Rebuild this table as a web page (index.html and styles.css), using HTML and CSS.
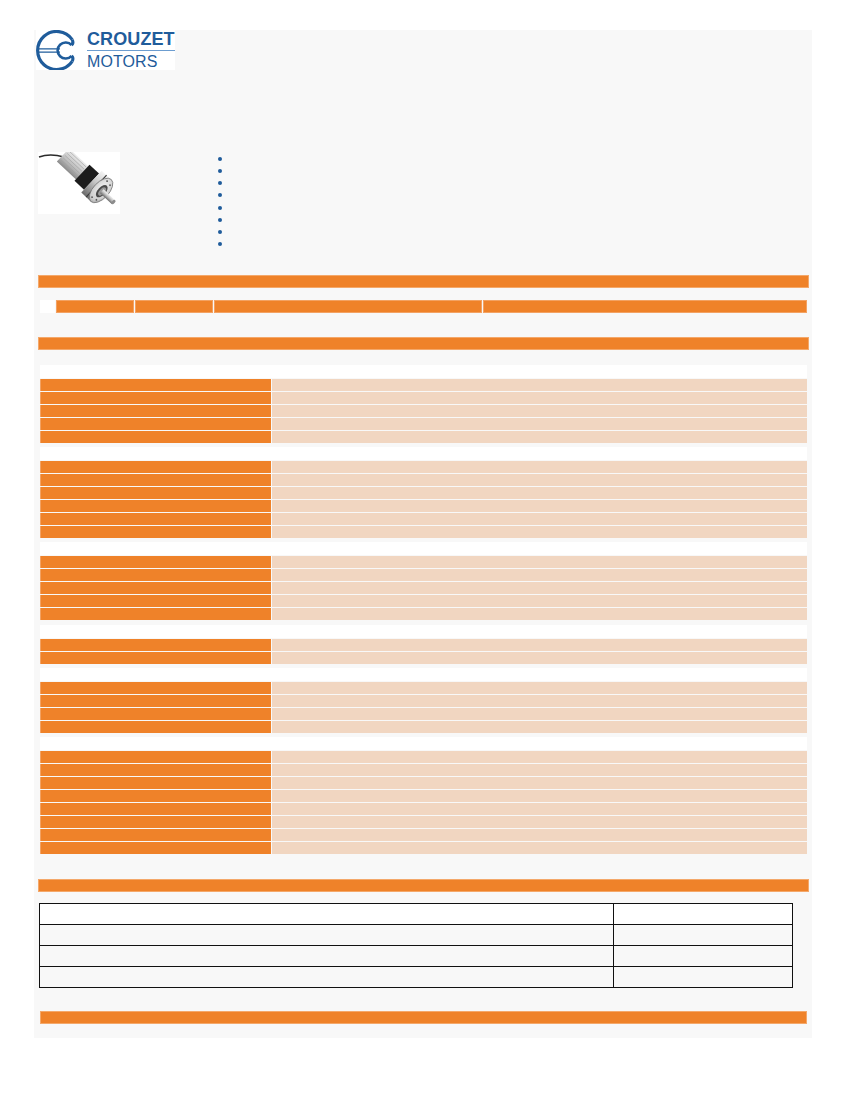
FILE: index.html
```html
<!DOCTYPE html>
<html lang="en">
<head>
<meta charset="utf-8">
<title>Crouzet Motors</title>
<link rel="stylesheet" href="styles.css">
</head>
<body>
<div class="page">
  <header class="logo">
    <svg class="logo-mark" viewBox="0 0 50 40" width="50" height="40" aria-hidden="true">
      <path d="M36.2 9.6 A19 19 0 1 0 36.2 31.4" fill="none" stroke="#1f5c9b" stroke-width="3.2"/>
      <path d="M36.2 9.6 Q38 13 35.6 15.2" fill="none" stroke="#1f5c9b" stroke-width="3"/>
      <path d="M36.2 31.4 Q38 28 35.6 25.8" fill="none" stroke="#1f5c9b" stroke-width="3"/>
      <path d="M35.6 15.2 A8 8 0 1 0 35.6 25.8" fill="none" stroke="#1f5c9b" stroke-width="2.6"/>
      <path d="M2 18.9 H24 M2 22.1 H24" stroke="#1f5c9b" stroke-width="1.3"/>
    </svg>
    <div class="logo-text">
      <div class="brand">CROUZET</div>
      <div class="brand-rule"></div>
      <div class="brand-sub">MOTORS</div>
    </div>
  </header>

  <section class="product">
    <div class="photo">
      <svg viewBox="0 0 82 62" width="82" height="62" aria-hidden="true">
        <defs>
          <linearGradient id="metal" x1="0" y1="0" x2="0" y2="1">
            <stop offset="0" stop-color="#f4f4f4"/>
            <stop offset="0.45" stop-color="#c4c4c4"/>
            <stop offset="1" stop-color="#6a6a6a"/>
          </linearGradient>
          <linearGradient id="housing" x1="0" y1="0" x2="0" y2="1">
            <stop offset="0" stop-color="#ececec"/>
            <stop offset="0.6" stop-color="#bcbcbc"/>
            <stop offset="1" stop-color="#8a8a8a"/>
          </linearGradient>
          <radialGradient id="face" cx="0.45" cy="0.4" r="0.7">
            <stop offset="0" stop-color="#f2f2f2"/>
            <stop offset="0.7" stop-color="#cfcfcf"/>
            <stop offset="1" stop-color="#8e8e8e"/>
          </radialGradient>
        </defs>
        <path d="M1 5 Q12 1 26 5" fill="none" stroke="#2a2a2a" stroke-width="1.4"/>
        <g transform="translate(25 3) rotate(43)">
          <rect x="0" y="-9" width="27" height="18" fill="url(#housing)"/>
          <path d="M2 -7 H25 M2 -4 H25 M2 -1 H25 M2 2 H25 M2 5 H25" stroke="#9e9e9e" stroke-width="0.6"/>
          <rect x="26" y="-11" width="13" height="22" fill="#1c1c1c"/>
          <rect x="39" y="-15" width="13" height="30" fill="url(#metal)"/>
          <rect x="45" y="-15" width="1.2" height="30" fill="#3a3a3a"/>
          <ellipse cx="52" cy="0" rx="8" ry="15" fill="url(#face)" stroke="#777" stroke-width="0.8"/>
          <ellipse cx="53" cy="0" rx="4" ry="7.5" fill="#4a4a4a"/>
          <ellipse cx="53.5" cy="0" rx="2.6" ry="5" fill="#9a9a9a"/>
          <rect x="53" y="-2.6" width="16" height="5.2" fill="url(#metal)"/>
          <ellipse cx="69" cy="0" rx="1.5" ry="2.6" fill="#8c8c8c"/>
          <circle cx="50" cy="-11" r="0.9" fill="#555"/>
          <circle cx="50" cy="11" r="0.9" fill="#555"/>
          <circle cx="55" cy="-10" r="0.9" fill="#555"/>
          <circle cx="55" cy="10" r="0.9" fill="#555"/>
        </g>
      </svg>
    </div>
    <ul class="features">
      <li></li><li></li><li></li><li></li><li></li><li></li><li></li><li></li>
    </ul>
  </section>

  <div class="bar bar-first"></div>

  <div class="ref-row">
    <div class="ref-cell ref-blank"></div>
    <div class="ref-cell ref-narrow"></div>
    <div class="ref-cell ref-narrow"></div>
    <div class="ref-cell ref-mid"></div>
    <div class="ref-cell ref-wide"></div>
  </div>

  <div class="bar bar-second"></div>

  <div class="specs">
    <div class="group">
      <div class="group-title"></div>
      <div class="row"><div class="k"></div><div class="v"></div></div>
      <div class="row"><div class="k"></div><div class="v"></div></div>
      <div class="row"><div class="k"></div><div class="v"></div></div>
      <div class="row"><div class="k"></div><div class="v"></div></div>
      <div class="row"><div class="k"></div><div class="v"></div></div>
    </div>
    <div class="group">
      <div class="group-title"></div>
      <div class="row"><div class="k"></div><div class="v"></div></div>
      <div class="row"><div class="k"></div><div class="v"></div></div>
      <div class="row"><div class="k"></div><div class="v"></div></div>
      <div class="row"><div class="k"></div><div class="v"></div></div>
      <div class="row"><div class="k"></div><div class="v"></div></div>
      <div class="row"><div class="k"></div><div class="v"></div></div>
    </div>
    <div class="group">
      <div class="group-title"></div>
      <div class="row"><div class="k"></div><div class="v"></div></div>
      <div class="row"><div class="k"></div><div class="v"></div></div>
      <div class="row"><div class="k"></div><div class="v"></div></div>
      <div class="row"><div class="k"></div><div class="v"></div></div>
      <div class="row"><div class="k"></div><div class="v"></div></div>
    </div>
    <div class="group">
      <div class="group-title"></div>
      <div class="row"><div class="k"></div><div class="v"></div></div>
      <div class="row"><div class="k"></div><div class="v"></div></div>
    </div>
    <div class="group">
      <div class="group-title"></div>
      <div class="row"><div class="k"></div><div class="v"></div></div>
      <div class="row"><div class="k"></div><div class="v"></div></div>
      <div class="row"><div class="k"></div><div class="v"></div></div>
      <div class="row"><div class="k"></div><div class="v"></div></div>
    </div>
    <div class="group">
      <div class="group-title"></div>
      <div class="row"><div class="k"></div><div class="v"></div></div>
      <div class="row"><div class="k"></div><div class="v"></div></div>
      <div class="row"><div class="k"></div><div class="v"></div></div>
      <div class="row"><div class="k"></div><div class="v"></div></div>
      <div class="row"><div class="k"></div><div class="v"></div></div>
      <div class="row"><div class="k"></div><div class="v"></div></div>
      <div class="row"><div class="k"></div><div class="v"></div></div>
      <div class="row"><div class="k"></div><div class="v"></div></div>
    </div>
  </div>

  <div class="bar bar-third"></div>

  <table class="docs">
    <tr class="docs-head"><td class="docs-name"></td><td></td></tr>
    <tr><td class="docs-name"></td><td></td></tr>
    <tr><td class="docs-name"></td><td></td></tr>
    <tr><td class="docs-name"></td><td></td></tr>
  </table>

  <div class="bar bar-last"></div>
</div>
</body>
</html>
```

FILE: styles.css
```css
html, body {
  margin: 0;
  padding: 0;
  background: #ffffff;
  font-family: "Liberation Sans", Arial, sans-serif;
}

.page {
  display: flow-root;
  margin: 30px 0 0 34px;
  width: 778px;
  padding-bottom: 14px;
  background: #f8f8f8;
}

/* Logo */
.logo {
  display: flex;
  margin-left: 2px;
  width: 139px;
  height: 40px;
  background: #ffffff;
}

.logo-mark {
  flex: none;
  display: block;
}

.logo-text {
  flex: 1;
  padding-left: 1px;
  color: #1f5c9b;
}

.brand {
  font-size: 18px;
  line-height: 18px;
  font-weight: bold;
  letter-spacing: 0.1px;
}

.brand-rule {
  margin-top: 2px;
  height: 1px;
  background: #6c9dd0;
}

.brand-sub {
  margin-top: 3px;
  font-size: 16px;
  line-height: 16px;
  letter-spacing: 0.1px;
}

/* Product */
.product {
  display: flex;
  align-items: flex-start;
  margin-top: 82px;
  height: 100px;
}

.photo {
  flex: none;
  margin-left: 4px;
  width: 82px;
  height: 62px;
  background: #ffffff;
}

.photo svg {
  display: block;
}

.features {
  list-style: none;
  margin: 0 0 0 98px;
  padding: 5px 0 0 0;
}

.features li {
  box-sizing: border-box;
  height: 12.15px;
}

.features li::before {
  content: "";
  display: block;
  width: 4px;
  height: 4px;
  border-radius: 50%;
  background: #1f5c9b;
}

/* Orange section bars */
.bar {
  box-sizing: border-box;
  height: 13px;
  margin: 24px 3px 0 4px;
  background: #ef8229;
  border: 1px solid #f4a86a;
}

.bar-first {
  margin-top: 23px;
}

.bar-third {
  margin-top: 25px;
}

.bar-last {
  margin: 23px 5px 0 6px;
}

/* Reference row */
.ref-row {
  display: flex;
  gap: 1px;
  margin: 12px 0 0 6px;
  height: 13px;
}

.ref-cell {
  background: #ef8229;
  box-shadow: inset 0 0 0 1px #f3a263;
}

.ref-blank {
  width: 15px;
  background: #ffffff;
  box-shadow: none;
}

.ref-narrow { width: 78px; }
.ref-mid { width: 268px; }
.ref-wide { width: 324px; }

/* Specifications */
.specs {
  display: flex;
  flex-direction: column;
  gap: 4.2px;
  margin: 15px 0 0 6px;
  width: 767px;
}

.group {
  display: flex;
  flex-direction: column;
  gap: 1px;
}

.group-title {
  height: 13px;
  background: #ffffff;
}

.row {
  display: flex;
  gap: 1px;
  height: 12px;
}

.k {
  width: 231px;
  background: #ef8229;
  box-shadow: inset 1px 0 0 #f3a263;
}

.v {
  flex: 1;
  background: #f1d6c1;
}

/* Documents table */
.docs {
  margin: 11px 0 0 5px;
  width: 754px;
  border-collapse: collapse;
  border: 1px solid #111111;
}

.docs td {
  height: 20px;
  padding: 0;
  border: 1px solid #111111;
}

.docs-name {
  width: 573px;
}

.docs-head td {
  background: #ffffff;
}
```
